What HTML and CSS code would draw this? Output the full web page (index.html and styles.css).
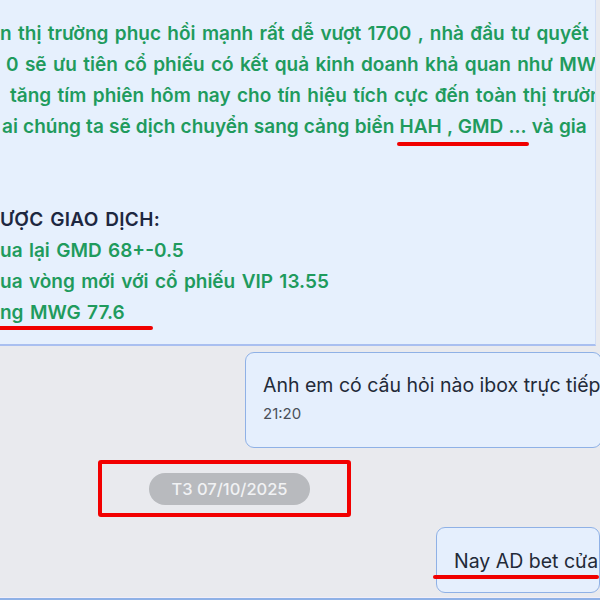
FILE: index.html
```html
<!DOCTYPE html>
<html lang="vi">
<head>
<meta charset="utf-8">
<link rel="stylesheet" href="styles.css">
</head>
<body>
<div class="screen">
  <div class="post">
    <div class="line l1">n thị trường phục hồi mạnh rất dễ vượt 1700 , nhà đầu tư quyết</div>
    <div class="line l2">0 sẽ ưu tiên cổ phiếu có kết quả kinh doanh khả quan như MWG</div>
    <div class="line l3">tăng tím phiên hôm nay cho tín hiệu tích cực đến toàn thị trường</div>
    <div class="line l4">ai chúng ta sẽ dịch chuyển sang cảng biển <span class="mark mark-a">HAH , GMD ...</span> và gia</div>
    <div class="line gap"></div>
    <div class="line l5 dark">ƯỢC GIAO DỊCH:</div>
    <div class="line l6">ua lại GMD 68+-0.5</div>
    <div class="line l7">ua vòng mới với cổ phiếu VIP 13.55</div>
    <div class="line l8"><span class="mark mark-b">ng MWG 77.6</span></div>
  </div>
  <div class="chat">
    <div class="row right-a">
      <div class="bubble b1">
        <div class="msg">Anh em có cấu hỏi nào ibox trực tiếp</div>
        <div class="time">21:20</div>
      </div>
    </div>
    <div class="row date-row">
      <div class="date-box">
        <span class="pill">T3 07/10/2025</span>
      </div>
    </div>
    <div class="row right-b">
      <div class="bubble b2">
        <div class="msg">Nay AD bet cửa</div>
        <span class="mark-c"></span>
      </div>
    </div>
    <div class="next"></div>
  </div>
</div>
</body>
</html>
```
FILE: styles.css
```css
html, body {
  margin: 0;
  padding: 0;
}
body {
  width: 600px;
  height: 600px;
  overflow: hidden;
  font-family: Inter, "Noto Sans", sans-serif;
}
.screen {
  width: 600px;
  height: 600px;
  overflow: hidden;
  background: #e9eaee;
  display: flex;
  flex-direction: column;
}
.post {
  background: #e6f0fd;
  height: 346px;
  flex: none;
  box-sizing: border-box;
  padding-top: 18px;
  border-bottom: 2px solid #a9bff0;
  border-right: 1px solid #d2def5;
  margin-right: 4px;
  overflow: hidden;
}
.line {
  height: 31px;
  line-height: 31px;
  font-size: 19px;
  font-weight: 600;
  color: #1f9b5d;
  white-space: nowrap;
  word-spacing: 1.6px;
}
.line.gap { height: 62px; }
.l1 { padding-left: 0; }
.l2 { padding-left: 6px; }
.l3 { padding-left: 10px; }
.l4 { padding-left: 2px; word-spacing: 0.4px; }
.dark {
  color: #1d2740;
  font-weight: 600;
  letter-spacing: 0.3px;
}
.mark {
  position: relative;
}
.mark::after {
  content: "";
  position: absolute;
  left: -3px;
  right: -2px;
  bottom: -8px;
  height: 4px;
  border-radius: 2px;
  background: #f00000;
}
.mark-b::after {
  left: -4px;
  right: -28px;
  bottom: -6px;
}
.chat {
  flex: 1;
  display: flex;
  flex-direction: column;
  padding-top: 6px;
  overflow: hidden;
}
.row {
  display: flex;
}
.right-a { padding-left: 245px; }
.bubble {
  background: #e5effd;
  border: 1.5px solid #8fb1e6;
  border-radius: 9px;
  box-sizing: border-box;
  position: relative;
}
.b1 {
  width: 380px;
  height: 96px;
  padding: 17px 0 0 17px;
}
.msg {
  font-size: 19.5px;
  line-height: 30px;
  color: #232a38;
  white-space: nowrap;
}
.time {
  margin-top: 5px;
  font-size: 15px;
  line-height: 18px;
  color: #4a4f59;
}
.date-row {
  padding-left: 98px;
  padding-top: 12px;
}
.date-box {
  width: 253px;
  height: 57px;
  box-sizing: border-box;
  border: 4px solid #f20000;
  border-radius: 3px;
  display: flex;
  align-items: center;
  padding-left: 47px;
}
.pill {
  display: inline-block;
  width: 161px;
  height: 32px;
  line-height: 32px;
  text-align: center;
  border-radius: 16px;
  background: #b8babe;
  color: #f1f2f4;
  font-size: 16.5px;
  font-weight: 500;
}
.right-b {
  padding-left: 436px;
  padding-top: 10px;
}
.b2 {
  width: 200px;
  height: 66px;
  padding: 18px 0 0 17px;
}
.mark-c {
  position: absolute;
  left: -4px;
  right: 0;
  top: 47px;
  height: 4px;
  border-radius: 2px;
  background: #f00000;
}
.next {
  margin-top: 4px;
  height: 6px;
  background: #f1eef8;
  border-bottom: 2px solid #8fb1e6;
}
```
